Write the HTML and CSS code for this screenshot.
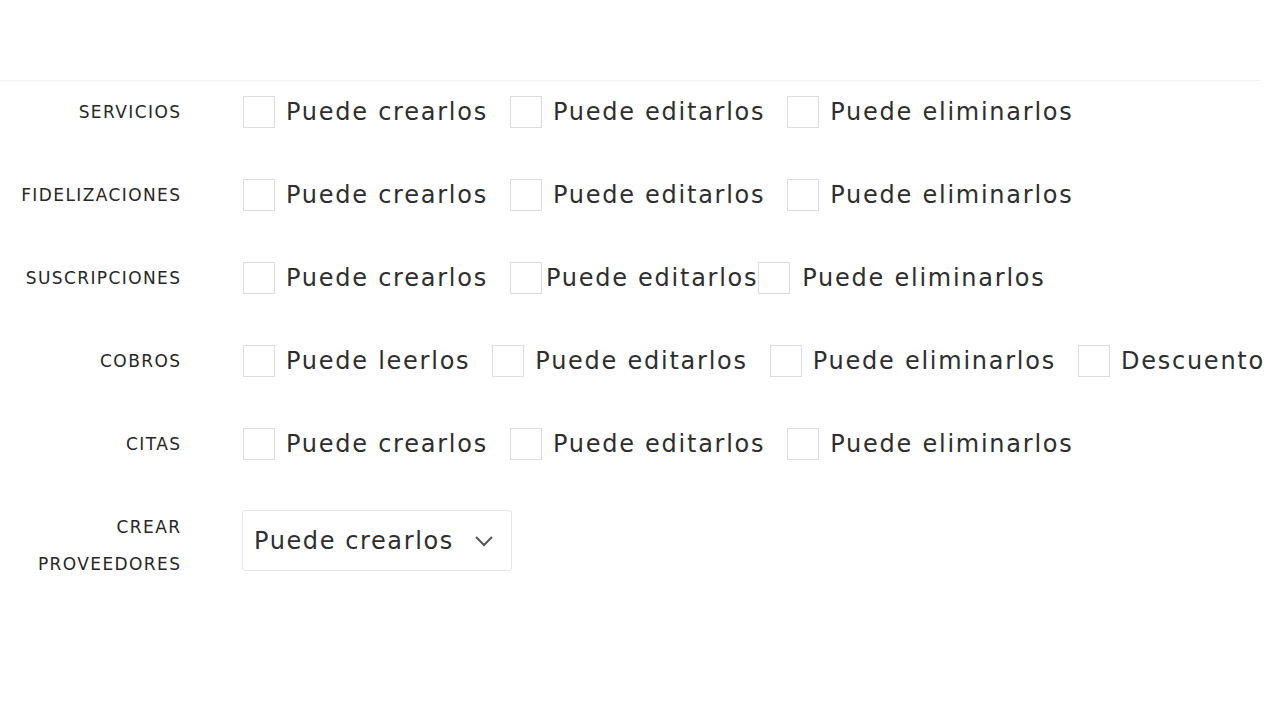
FILE: index.html
```html
<!DOCTYPE html>
<html lang="es">
<head>
  <meta charset="UTF-8" />
  <meta name="viewport" content="width=device-width, initial-scale=1.0"/>
  <title>Permisos</title>
  <link rel="stylesheet" href="styles.css">
</head>
<body>

  <div class="top-space"></div>

  <!-- Permisos -->
  <div class="perms">
    <div class="perm-row">
      <div class="perm-label">SERVICIOS</div>
      <div class="perm-options">
        <label class="opt"><span class="box"></span>Puede crearlos</label>
        <label class="opt"><span class="box"></span>Puede editarlos</label>
        <label class="opt"><span class="box"></span>Puede eliminarlos</label>
      </div>
    </div>

    <div class="perm-row">
      <div class="perm-label">FIDELIZACIONES</div>
      <div class="perm-options">
        <label class="opt"><span class="box"></span>Puede crearlos</label>
        <label class="opt"><span class="box"></span>Puede editarlos</label>
        <label class="opt"><span class="box"></span>Puede eliminarlos</label>
      </div>
    </div>

    <div class="perm-row">
      <div class="perm-label">SUSCRIPCIONES</div>
      <div class="perm-options">
        <label class="opt"><span class="box"></span>Puede crearlos</label>
        <label class="opt tight"><span class="box"></span>Puede editarlos</label>
        <label class="opt tight-left"><span class="box"></span>Puede eliminarlos</label>
      </div>
    </div>

    <div class="perm-row">
      <div class="perm-label">COBROS</div>
      <div class="perm-options">
        <label class="opt"><span class="box"></span>Puede leerlos</label>
        <label class="opt"><span class="box"></span>Puede editarlos</label>
        <label class="opt"><span class="box"></span>Puede eliminarlos</label>
        <label class="opt"><span class="box"></span>Descuento</label>
      </div>
    </div>

    <div class="perm-row">
      <div class="perm-label">CITAS</div>
      <div class="perm-options">
        <label class="opt"><span class="box"></span>Puede crearlos</label>
        <label class="opt"><span class="box"></span>Puede editarlos</label>
        <label class="opt"><span class="box"></span>Puede eliminarlos</label>
      </div>
    </div>

    <div class="perm-row select-row">
      <div class="perm-label two-lines">CREAR<br>PROVEEDORES</div>
      <div class="perm-options">
        <div class="select">
          <span>Puede crearlos</span>
          <svg width="20" height="12" viewBox="0 0 20 12"><path d="M2 2 L10 10 L18 2" fill="none" stroke="#555" stroke-width="2"/></svg>
        </div>
      </div>
    </div>
  </div>

</body>
</html>
```

FILE: styles.css
```css
body {
  font-family: 'DejaVu Sans', sans-serif;
  background: #fff;
  color: #2e2e2e;
  margin: 0;
  padding: 0;
}

.top-space {
  height: 80px;
  border-bottom: 1px solid #f1f1f1;
  margin-right: 20px;
}

.perms {
  padding-top: 14px;
  display: flex;
  flex-direction: column;
  gap: 49px;
}

.perm-row {
  display: flex;
  align-items: center;
  height: 34px;
}

.perm-label {
  width: 181.4px;
  flex-shrink: 0;
  text-align: right;
  font-size: 17px;
  color: #262626;
  letter-spacing: 1.4px;
  margin-right: -1.4px;
}

.perm-options {
  display: flex;
  align-items: center;
  margin-left: 63px;
  gap: 22px;
}

.opt {
  display: flex;
  align-items: center;
  font-size: 24px;
  letter-spacing: 1.75px;
  white-space: nowrap;
}

.box {
  width: 30px;
  height: 30px;
  border: 1px solid #dcdcdc;
  margin-right: 11px;
  background: #fff;
}

.opt.tight .box {
  margin-right: 4px;
}

.opt.tight-left {
  margin-left: -22px;
}

.opt.tight-left .box {
  margin-right: 12px;
}

.select-row {
  align-items: flex-start;
  height: 61px;
}

.two-lines {
  line-height: 37px;
  margin-top: -1px;
}

.select {
  width: 240px;
  height: 59px;
  border: 1px solid #e6e6e6;
  border-radius: 3px;
  display: flex;
  align-items: center;
  justify-content: space-between;
  padding: 0 17px 0 11px;
  font-size: 24px;
  letter-spacing: 1.6px;
  margin-left: -1px;
}
```
